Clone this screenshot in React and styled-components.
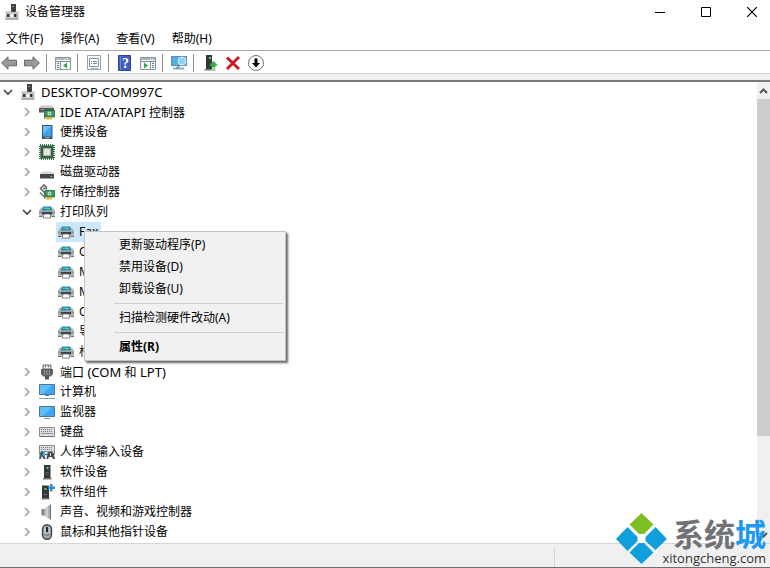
import React from "react";
import styled, { createGlobalStyle, css } from "styled-components";

const Global = createGlobalStyle`
  * { box-sizing: border-box; }
  body { margin: 0; background: #fff; }
  body, button {
    font-family: "Noto Sans", "Noto Sans CJK SC", sans-serif;
    font-size: 12px;
    line-height: 20px;
    color: #000;
  }
  button { border: 0; padding: 0; margin: 0; background: none; }
  ul { list-style: none; margin: 0; padding: 0; }
`;

const Window = styled.div`
  position: relative;
  display: flex;
  flex-direction: column;
  height: 100vh;
  overflow: hidden;
  background: #fff;
  border-bottom: 1px solid #6e6e6e;
`;

const TitleBar = styled.header`
  display: flex;
  align-items: center;
  justify-content: space-between;
  height: 24px;
  padding-left: 4px;
  flex: none;
`;

const Title = styled.h1`
  display: flex;
  align-items: center;
  gap: 5px;
  margin: 0;
  font-size: 12px;
  font-weight: 400;
`;

const Controls = styled.div`
  display: flex;
  gap: 10px;
`;

const ControlButton = styled.button`
  display: grid;
  place-items: center;
  width: 36px;
  height: 22px;
`;

const MenuBar = styled.nav`
  display: flex;
  align-items: center;
  gap: 17px;
  height: 26px;
  padding: 4px 6px 0;
  flex: none;
`;

const ToolBar = styled.div`
  display: flex;
  align-items: center;
  gap: 7px;
  height: 24px;
  padding: 2px 1px 0;
  flex: none;
  border-top: 1px solid #a8a8a8;
  border-bottom: 1px solid #d6d6d6;
`;

const ToolButton = styled.button`
  display: block;
  width: 16px;
  height: 16px;
  svg { display: block; }
`;

const Divider = styled.span`
  width: 1px;
  height: 18px;
  margin: 0 1px 0 -1px;
  background: #8c8c8c;
`;

const Band = styled.div`
  height: 8px;
  flex: none;
  background: #f0f0f0;
  border-bottom: 2px solid #7b7b7b;
`;

const Body = styled.main`
  display: flex;
  flex: 1;
  min-height: 0;
`;

const Tree = styled.ul`
  flex: 1;
  min-width: 0;
`;

const Branch = styled.ul`
  padding-left: 19px;
`;

const Node = styled.li`
  position: relative;
`;

const Row = styled.div`
  display: flex;
  align-items: center;
  height: 20px;
  gap: 4px;
`;

const Expander = styled.button`
  display: grid;
  place-items: center;
  width: 16px;
  height: 16px;
  flex: none;
`;

const Indent = styled.span`
  width: 16px;
  flex: none;
`;

const Entry = styled.span`
  display: flex;
  align-items: center;
  gap: 5px;
  height: 20px;
  white-space: nowrap;
  svg { display: block; flex: none; }
  ${(p) => p.$selected && css`
    background: #cce8ff;
    box-shadow: -2px 0 #cce8ff, 3px 0 #cce8ff;
  `}
`;

const Latin = styled.span`
  font-size: 13px;
`;

const ContextMenu = styled.div`
  position: absolute;
  z-index: 2;
  left: 46px;
  top: 9px;
  width: 202px;
  padding: 2px;
  border: 1px solid #c4c4c4;
  background: #f1f1f1;
  box-shadow: 2px 2px 2px rgba(0, 0, 0, 0.6);
`;

const MenuItem = styled.button`
  display: block;
  width: 100%;
  height: 22px;
  padding-left: 32px;
  text-align: left;
  font-weight: ${(p) => (p.$bold ? 700 : 400)};
`;

const MenuRule = styled.hr`
  height: 1px;
  margin: 3px 0 3px 27px;
  border: 0;
  background: #cdcdcd;
`;

const ScrollBar = styled.div`
  display: flex;
  flex-direction: column;
  width: 13px;
  flex: none;
  background: #f0f0f0;
`;

const ScrollButton = styled.button`
  display: grid;
  place-items: center;
  height: 17px;
  flex: none;
`;

const ScrollTrack = styled.div`
  flex: 1;
`;

const Thumb = styled.div`
  height: 79%;
  background: #cdcdcd;
`;

const StatusBar = styled.footer`
  display: grid;
  grid-template-columns: 1fr 132px 83px;
  height: 24px;
  padding-top: 3px;
  flex: none;
  background: #f0f0f0;
  border-top: 1px solid #d6d6d6;
`;

const StatusCell = styled.span`
  border-right: 1px solid #d4d4d4;
  &:last-child { border: 0; }
`;

const Brand = styled.div`
  position: absolute;
  z-index: 3;
  right: 4px;
  bottom: 0;
  display: flex;
  align-items: flex-end;
`;

const BrandText = styled.div`
  display: flex;
  flex-direction: column;
  align-items: flex-end;
  margin-left: -5px;
`;

const BrandName = styled.strong`
  font-family: "Noto Sans CJK SC", sans-serif;
  font-size: 31px;
  font-weight: 700;
  line-height: 32px;
  color: #717275;
  em { font-style: normal; color: #1e98f5; }
`;

const BrandSite = styled.span`
  font-family: "Open Sans", sans-serif;
  font-size: 13px;
  line-height: 18px;
  color: #333;
`;

const Svg = ({ children, w = 16, h = 16 }) => (
  <svg width={w} height={h} viewBox={`0 0 ${w} ${h}`} aria-hidden="true">{children}</svg>
);

const ComputerIcon = () => (
  <Svg>
    <path d="M7 0h5v8H7z" fill="#3f4244" />
    <path d="M8 2h2v1H8z" fill="#8d9a9a" />
    <path d="M9 6h2v3H9z" fill="#222" />
    <path d="M2 8h12v7H2z" fill="#d3d5d6" stroke="#9a9d9f" strokeWidth=".7" />
    <path d="M3 10h2.500v3H3zM10 10h2.500v3H10z" fill="#303335" />
    <path d="M6.500 10.500h2.500v2.500H6.500z" fill="#fff" />
    <path d="M1.500 15h13" stroke="#888" />
  </Svg>
);

const Card = () => (
  <>
    <path d="M5.500 7v8" stroke="#777" />
    <path d="M6 6.500h9.500v6.500H6z" fill="#3a9a60" stroke="#1f6b3c" strokeWidth=".8" />
    <circle cx="10.500" cy="9.500" r="2" fill="#c2e0cd" />
    <circle cx="10.500" cy="9.500" r=".8" fill="#3a9a60" />
    <path d="M7 13h6v2.500H7z" fill="#e2b23c" />
  </>
);

const IdeIcon = () => (
  <Svg>
    <path d="M0 4l2-2.500h11L15 4z" fill="#c8caca" />
    <path d="M0 4h15v4.500H0z" fill="#55595a" />
    <path d="M2 5.500h3" stroke="#9aa0a0" />
    <Card />
  </Svg>
);

const StorageIcon = () => (
  <Svg>
    <path d="M8 3.500L5 1 1.500 4.500 5 8h3M4 4.500h4" fill="none" stroke="#5c5f60" strokeWidth="1.500" />
    <path d="M1 8.500l4 4" stroke="#777" strokeWidth="1.600" />
    <Card />
  </Svg>
);

const PortableIcon = () => (
  <Svg>
    <path d="M3 1h10.500v14H3z" fill="#3c5361" />
    <path d="M4 2h8.500v10.500H4z" fill="#38a4f0" />
    <path d="M4 2h8.500L4 10z" fill="#6cc1fa" />
    <path d="M6 13.800h5" stroke="#9db4c2" />
  </Svg>
);

const CpuIcon = () => (
  <Svg>
    <path d="M1 1h14v14H1z" fill="none" stroke="#3e7a4e" strokeWidth="2" strokeDasharray="1 1" />
    <path d="M1.500 1.500h13v13h-13z" fill="#35603f" />
    <path d="M4.500 4.500h7v7h-7z" fill="#e2e5e3" stroke="#a5b5aa" />
  </Svg>
);

const DiskIcon = () => (
  <Svg>
    <path d="M1 10l2-2.500h10l2 2.500z" fill="#d3d5d5" />
    <path d="M1 10h14v4.500H1z" fill="#444849" />
    <path d="M11.500 12.500h2" stroke="#60d060" />
  </Svg>
);

const PrinterIcon = () => (
  <Svg>
    <path d="M0 6.500l2-3h12l2 3V13h-4V9.500H4V13H0z" fill="#b4babc" />
    <path d="M0 7.500h16v2H0z" fill="#8f9698" />
    <path d="M4 2.500h8l1 4H3z" fill="#2784a8" />
    <path d="M5 3.500h5v1.500H5z" fill="#43c0d4" />
    <path d="M8 4h3v1.500H8z" fill="#5fd265" />
    <path d="M3 8h10v2.500H3z" fill="#3a4043" />
    <path d="M5 10h6l.8 4H4.200z" fill="#fff" stroke="#5f6568" strokeWidth=".8" />
    <path d="M0 12.500h3M13 12.500h3" stroke="#6c7274" />
  </Svg>
);

const PortIcon = () => (
  <Svg>
    <path d="M4 1h8v4H4z" fill="#e5e5e5" stroke="#6b6b6b" />
    <path d="M6 2.500h1M9 2.500h1" stroke="#444" />
    <path d="M2 5h12v5l-2 2.500H4L2 10z" fill="#5f6263" />
    <path d="M5.500 6v5M8 6v5M10.500 6v5" stroke="#96999a" />
    <path d="M6 12h4v3.500H6z" fill="#555" />
  </Svg>
);

const Screen = () => (
  <>
    <path d="M.5 2.500h15v10H.5z" fill="#3ba7f2" stroke="#4d7890" />
    <path d="M1 3h12L4 12H1z" fill="#63bdf8" />
  </>
);

const PcIcon = () => (
  <Svg>
    <g transform="translate(0 -2)"><Screen /></g>
    <path d="M6 11.500h4" stroke="#4b89ad" />
    <path d="M0 14.500h16" stroke="#7fa1b5" />
  </Svg>
);

const MonitorIcon = () => (
  <Svg><Screen /><path d="M5 14.500h6" stroke="#6da3c2" /></Svg>
);

const Keys = () => (
  <>
    <path d="M.5 3.500h15v9H.5z" fill="#dde0e2" stroke="#85898c" />
    <path d="M2 5.500h12M2 7.500h12" stroke="#747a7e" strokeDasharray="1 1" />
    <path d="M2 9.500h12" stroke="#8b9195" />
    <path d="M1 12.500h14" stroke="#6b7073" />
  </>
);

const KeyboardIcon = () => <Svg><Keys /></Svg>;

const HidIcon = () => (
  <Svg>
    <g transform="translate(0 -2)"><Keys /></g>
    <path d="M1 9q2-4 4 0l1.500 6H4.500L3 12l-1 3H0z" fill="#40606e" />
    <path d="M7.500 15l1-6q3-3 6 0l1.500 6h-2l-1-2h-3l-1 2z" fill="#43484b" />
    <path d="M5 8v4" stroke="#42b3e4" strokeWidth="2" />
    <path d="M11.500 9v3" stroke="#d8dbdc" />
  </Svg>
);

const DeviceIcon = () => (
  <Svg>
    <path d="M5 1h6.500v13H5z" fill="#333839" />
    <path d="M4 14h8.500v1.500H4z" fill="#777" />
    <path d="M7.500 3h2v2h-2z" fill="#59cc5b" />
    <path d="M6.500 8.500h3M6.500 10.500h3" stroke="#596062" />
  </Svg>
);

const ComponentIcon = () => (
  <Svg>
    <path d="M3 1.500h7V14H3z" fill="#333839" />
    <path d="M2.500 14h8v1.500h-8z" fill="#777" />
    <path d="M5.500 4h2v2h-2z" fill="#59cc5b" />
    <path d="M5 10.500h3" stroke="#757d7e" />
    <path d="M9 2.500h2V0h2.500v2.500H16V5h-2.500v2.500H11V5H9z" fill="#2d8fce" />
  </Svg>
);

const SoundIcon = () => (
  <Svg>
    <path d="M2.500 5h3v6.500h-3z" fill="#7f8385" />
    <path d="M5.500 5l5.500-4.500v15l-5.500-4z" fill="#aeb2b4" />
    <path d="M7 4l2-1.500v11L7 12z" fill="#cfd2d3" />
    <path d="M11.500.500v15" stroke="#6d7275" />
  </Svg>
);

const MouseIcon = () => (
  <Svg>
    <rect x="3.500" y=".8" width="9" height="14.500" rx="4.500" fill="#a3adb5" stroke="#3d444a" strokeWidth="1.400" />
    <path d="M6 3v8M10.500 3v7" stroke="#ccd4da" />
    <path d="M8 3v5" stroke="#24292d" strokeWidth="2" />
    <path d="M4.500 10q3.500 3 7 0" fill="none" stroke="#6b737a" />
  </Svg>
);

const Arrow = ({ flip }) => (
  <Svg>
    <path
      transform={flip ? "translate(16 0) scale(-1 1)" : undefined}
      d="M.6 8L7 1.800V5.200h8.500v5.600H7v3.400z"
      fill="#9a9a9a" stroke="#666" strokeLinejoin="round"
    />
  </Svg>
);

const PanelIcon = ({ play }) => (
  <Svg>
    <path d="M.5 2.500h15v12H.5z" fill="#f7f9fa" stroke="#8b969e" />
    <path d="M1 4h14" stroke="#a9b5bd" strokeWidth="2" />
    <path d="M10 4h4" stroke="#fff" strokeDasharray="1 1" />
    <path d="M1 6.500h14" stroke="#7c8890" />
    <path d={play ? "M10.500 7v7" : "M5.500 7v7"} stroke="#8b969e" />
    <path d={play ? "M12 8.500h2M12 10.500h2M12 12.500h2" : "M2 8.500h2M2 10.500h2M2 12.500h2"} stroke="#5c7d9b" />
    <path d={play ? "M4 7.500l4 3-4 3z" : "M12 7.500l-4 3 4 3z"} fill="#35ab3d" />
  </Svg>
);

const PropertiesIcon = () => (
  <Svg>
    <path d="M1.500.500h13v14h-13z" fill="#f8f9fa" stroke="#9aa3aa" />
    <path d="M3.500 3.500h9v8h-9z" fill="#fff" stroke="#8999a5" />
    <path d="M4 3.500h4" stroke="#7d9ab0" />
    <path d="M5 6.500h1M7 6.500h4M5 8.500h1M7 8.500h4" stroke="#738899" />
    <path d="M5 13.500h3M9 13.500h3" stroke="#71b9da" />
  </Svg>
);

const HelpGlyph = styled.text`
  font: 700 14px "Liberation Serif", serif;
  fill: #fff;
`;

const HelpIcon = () => (
  <Svg>
    <path d="M1.500.500h12v15h-12z" fill="#3f5fc0" stroke="#2b458f" />
    <path d="M3.500 1v14" stroke="#6f88d6" />
    <HelpGlyph x="5" y="13">?</HelpGlyph>
  </Svg>
);

const ScanIcon = () => (
  <Svg w={18}>
    <path d="M.5 1.500h15v9H.5z" fill="#4fb0e2" stroke="#5d8ca4" />
    <path d="M2 13.500h11" stroke="#82b1ca" strokeWidth="2" />
    <path d="M5.500 14l3-4" stroke="#7f8f97" strokeWidth="2" />
    <circle cx="11" cy="6" r="4" fill="#8ed3f3" stroke="#d5eff9" />
  </Svg>
);

const UpdateIcon = () => (
  <Svg>
    <path d="M4 0h6v14H4z" fill="#333839" />
    <path d="M2.500 14h7v1.500h-7z" fill="#777" />
    <path d="M7 2h2v2H7z" fill="#59cc5b" />
    <path d="M11.500 6l4.500 4.500h-2.500V12h-4v-1.500H7z" fill="#34ae49" />
    <path d="M9.500 13h4M9.500 15h4" stroke="#34ae49" />
  </Svg>
);

const RemoveIcon = () => (
  <Svg><path d="M2 2.500L14 14M14 2L2 14" stroke="#cf1b24" strokeWidth="3" /></Svg>
);

const DownIcon = () => (
  <Svg>
    <circle cx="8" cy="8" r="7.500" fill="#fff" stroke="#777" />
    <path d="M6.500 3.500h3V8H12l-4 4.500L4 8h2.500z" fill="#000" />
  </Svg>
);

const Chevron = ({ open }) => (
  <svg width="10" height="10" viewBox="0 0 10 10" aria-hidden="true">
    {open
      ? <path d="M1 3l4 4 4-4" fill="none" stroke="#454545" strokeWidth="1.600" />
      : <path d="M3 1l4 4-4 4" fill="none" stroke="#a3a3a3" strokeWidth="1.600" />}
  </svg>
);

const ScrollArrow = ({ down }) => (
  <svg width="9" height="6" viewBox="0 0 9 6" aria-hidden="true">
    <path d={down ? "M1 1l3.500 3.500L8 1" : "M1 5l3.500-3.500L8 5"} fill="none" stroke="#555" strokeWidth="2" />
  </svg>
);

const BrandMark = () => (
  <svg width="51" height="54" viewBox="0 0 51 54" aria-hidden="true">
    <path d="M25.500 0L37.500 11.500 28 21H23L13.500 11.500z" fill="#7fbf26" />
    <path d="M11.500 14L21.500 24V28L11.500 38 0 26z" fill="#0f9fdb" />
    <path d="M39.500 14L51 26 39.500 37 29.500 28V24z" fill="#0f9fdb" />
    <path d="M23 30H28L37.500 39.500 25.500 51 13.500 39.500z" fill="#0f9fdb" />
  </svg>
);

const printers = ["Fax", "Office", "MS PD", "MS XP", "Office", "导出", "根队列"];

const devices = [
  ["IDE ATA/ATAPI 控制器", IdeIcon],
  ["便携设备", PortableIcon],
  ["处理器", CpuIcon],
  ["磁盘驱动器", DiskIcon],
  ["存储控制器", StorageIcon],
  ["打印队列", PrinterIcon, printers],
  ["端口 (COM 和 LPT)", PortIcon],
  ["计算机", PcIcon],
  ["监视器", MonitorIcon],
  ["键盘", KeyboardIcon],
  ["人体学输入设备", HidIcon],
  ["软件设备", DeviceIcon],
  ["软件组件", ComponentIcon],
  ["声音、视频和游戏控制器", SoundIcon],
  ["鼠标和其他指针设备", MouseIcon],
];

const Label = ({ text }) => (
  <span>
    {text.split(/([ -~]+)/).filter(Boolean).map((part, i) => (
      /^[ -~]/.test(part) ? <Latin key={i}>{part}</Latin> : part
    ))}
  </span>
);

const DeviceMenu = () => (
  <ContextMenu role="menu">
    <MenuItem role="menuitem">更新驱动程序(P)</MenuItem>
    <MenuItem role="menuitem">禁用设备(D)</MenuItem>
    <MenuItem role="menuitem">卸载设备(U)</MenuItem>
    <MenuRule />
    <MenuItem role="menuitem">扫描检测硬件改动(A)</MenuItem>
    <MenuRule />
    <MenuItem role="menuitem" $bold>属性(R)</MenuItem>
  </ContextMenu>
);

const PrinterNode = ({ label, selected }) => (
  <Node role="treeitem" aria-selected={selected}>
    <Row>
      <Indent />
      <Entry $selected={selected}><PrinterIcon />{label}</Entry>
    </Row>
    {selected && <DeviceMenu />}
  </Node>
);

const DeviceNode = ({ label, icon: Icon, items }) => (
  <Node role="treeitem" aria-expanded={Boolean(items)}>
    <Row>
      <Expander aria-label={label}><Chevron open={Boolean(items)} /></Expander>
      <Entry><Icon /><Label text={label} /></Entry>
    </Row>
    {items && (
      <Branch role="group">
        {items.map((name, i) => <PrinterNode key={i} label={name} selected={i === 0} />)}
      </Branch>
    )}
  </Node>
);

export default function App() {
  return (
    <Window>
      <Global />
      <TitleBar>
        <Title><ComputerIcon />设备管理器</Title>
        <Controls>
          <ControlButton aria-label="最小化">
            <svg width="10" height="10"><path d="M0 5.500h10" stroke="#000" /></svg>
          </ControlButton>
          <ControlButton aria-label="最大化">
            <svg width="10" height="10"><path d="M.5.500h9v9h-9z" fill="none" stroke="#000" /></svg>
          </ControlButton>
          <ControlButton aria-label="关闭">
            <svg width="10" height="10"><path d="M0 0l10 10M10 0L0 10" stroke="#000" strokeWidth="1.200" /></svg>
          </ControlButton>
        </Controls>
      </TitleBar>
      <MenuBar>
        {["文件(F)", "操作(A)", "查看(V)", "帮助(H)"].map((t) => <button key={t}>{t}</button>)}
      </MenuBar>
      <ToolBar role="toolbar">
        <ToolButton aria-label="后退"><Arrow /></ToolButton>
        <ToolButton aria-label="前进"><Arrow flip /></ToolButton>
        <Divider />
        <ToolButton aria-label="显示控制台树"><PanelIcon /></ToolButton>
        <Divider />
        <ToolButton aria-label="属性"><PropertiesIcon /></ToolButton>
        <Divider />
        <ToolButton aria-label="帮助"><HelpIcon /></ToolButton>
        <ToolButton aria-label="操作窗格"><PanelIcon play /></ToolButton>
        <Divider />
        <ToolButton aria-label="扫描"><ScanIcon /></ToolButton>
        <Divider />
        <ToolButton aria-label="更新"><UpdateIcon /></ToolButton>
        <ToolButton aria-label="卸载"><RemoveIcon /></ToolButton>
        <ToolButton aria-label="禁用"><DownIcon /></ToolButton>
      </ToolBar>
      <Band />
      <Body>
        <Tree role="tree">
          <Node role="treeitem" aria-expanded="true">
            <Row>
              <Expander aria-label="DESKTOP-COM997C"><Chevron open /></Expander>
              <Entry><ComputerIcon /><Label text="DESKTOP-COM997C" /></Entry>
            </Row>
            <Branch role="group">
              {devices.map(([label, icon, items]) => (
                <DeviceNode key={label} label={label} icon={icon} items={items} />
              ))}
            </Branch>
          </Node>
        </Tree>
        <ScrollBar>
          <ScrollButton aria-label="向上"><ScrollArrow /></ScrollButton>
          <ScrollTrack><Thumb /></ScrollTrack>
          <ScrollButton aria-label="向下"><ScrollArrow down /></ScrollButton>
        </ScrollBar>
      </Body>
      <StatusBar><StatusCell /><StatusCell /><StatusCell /></StatusBar>
      <Brand>
        <BrandMark />
        <BrandText>
          <BrandName>系统<em>城</em></BrandName>
          <BrandSite>xitongcheng.com</BrandSite>
        </BrandText>
      </Brand>
    </Window>
  );
}
